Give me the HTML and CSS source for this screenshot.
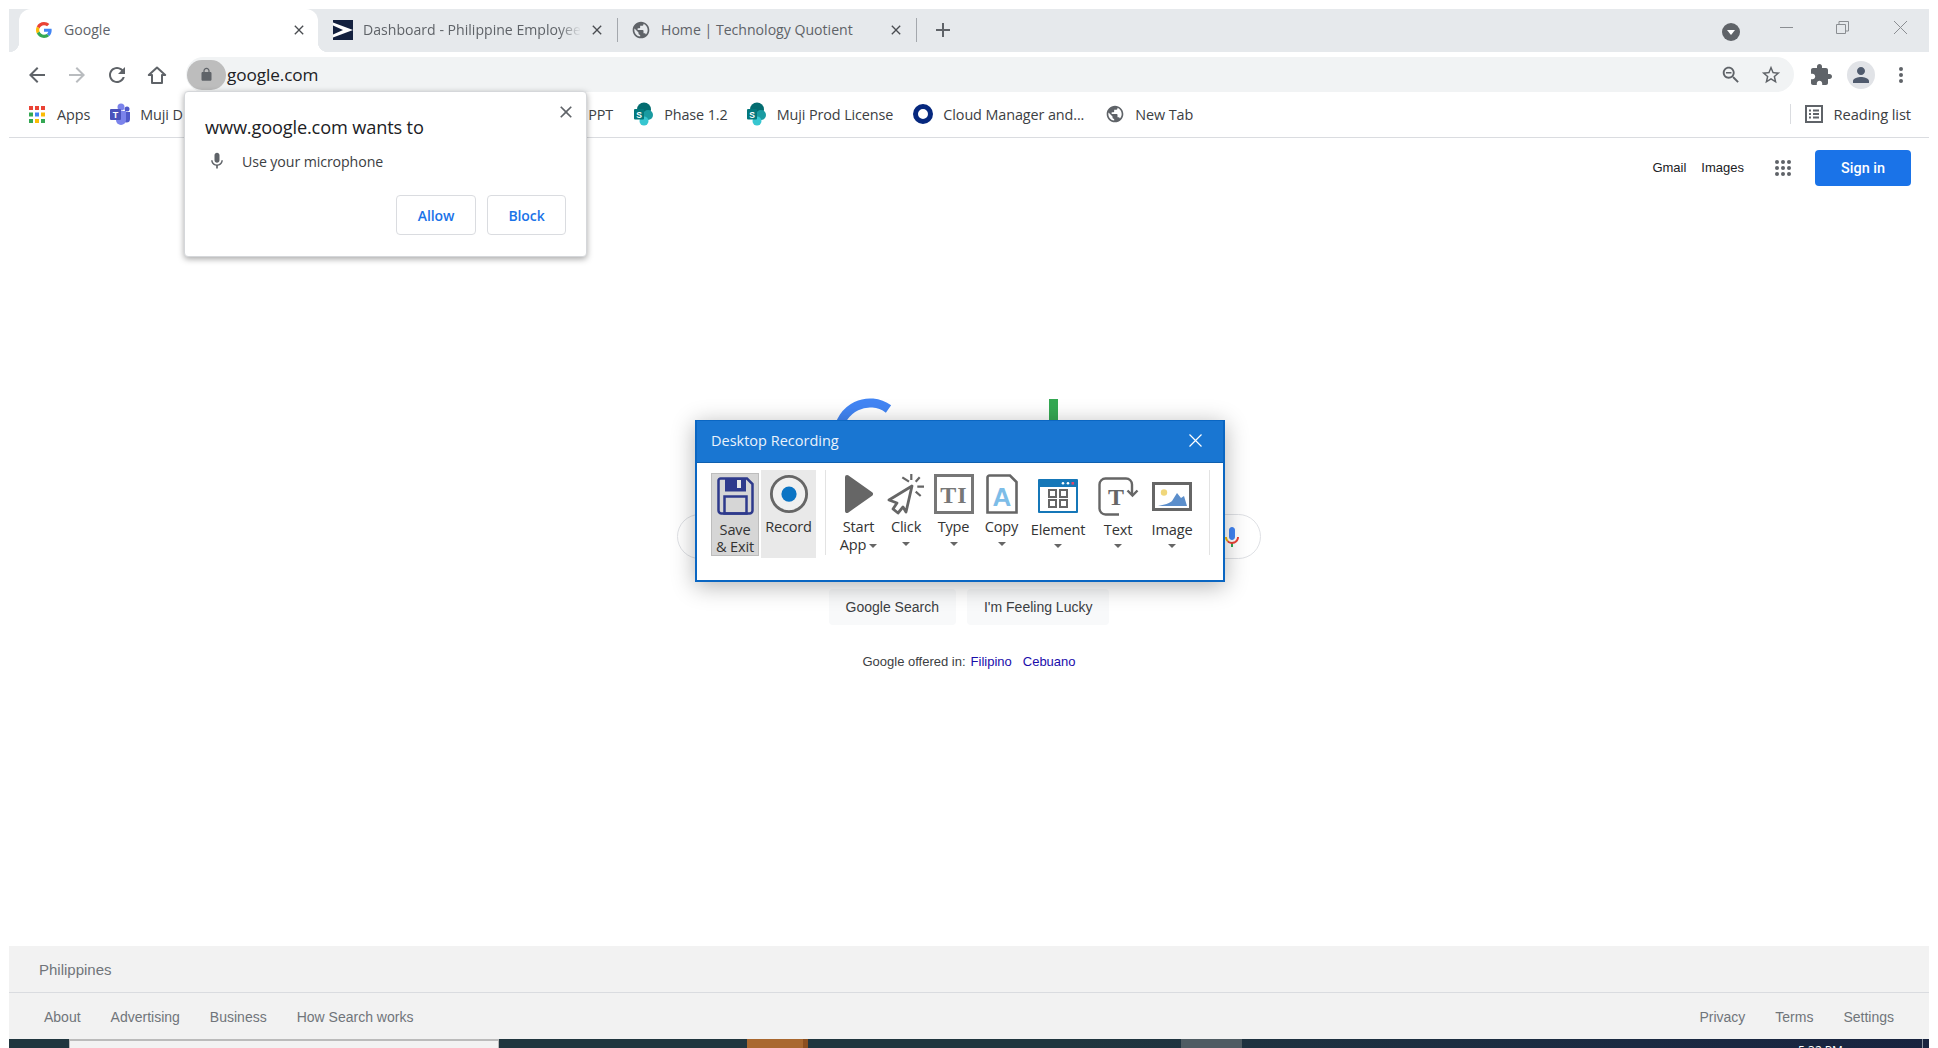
FILE: index.html
```html
<!DOCTYPE html>
<html lang="en">
<head>
<meta charset="utf-8">
<title>Google</title>
<link rel="stylesheet" href="styles.css">
</head>
<body>
<svg class="defs" aria-hidden="true">
  <symbol id="i-close" viewBox="0 0 24 24"><path d="M19 6.41L17.59 5 12 10.59 6.41 5 5 6.41 10.59 12 5 17.59 6.41 19 12 13.41 17.59 19 19 17.59 13.41 12z"/></symbol>
  <symbol id="i-globe" viewBox="0 0 24 24"><path d="M12 2C6.48 2 2 6.48 2 12s4.48 10 10 10 10-4.48 10-10S17.52 2 12 2zm-1 17.93c-3.95-.49-7-3.85-7-7.93 0-.62.08-1.21.21-1.79L9 15v1c0 1.1.9 2 2 2v1.93zm6.9-2.54c-.26-.81-1-1.39-1.9-1.39h-1v-3c0-.55-.45-1-1-1H8v-2h2c.55 0 1-.45 1-1V7h2c1.1 0 2-.9 2-2v-.41c2.93 1.19 5 4.06 5 7.41 0 2.08-.8 3.97-2.1 5.39z"/></symbol>
  <symbol id="i-mic" viewBox="0 0 24 24"><path d="M12 14c1.66 0 2.99-1.34 2.99-3L15 5c0-1.66-1.34-3-3-3S9 3.34 9 5v6c0 1.66 1.34 3 3 3zm5.3-3c0 3-2.54 5.1-5.3 5.1S6.7 14 6.7 11H5c0 3.41 2.72 6.23 6 6.72V21h2v-3.28c3.28-.48 6-3.3 6-6.72h-1.7z"/></symbol>
  <symbol id="i-sp" viewBox="0 0 20 24">
    <circle cx="11" cy="7.5" r="7" fill="#036c70"/><circle cx="15" cy="13" r="5" fill="#1a9ba1"/><circle cx="11" cy="19" r="4.5" fill="#37c6d0"/>
    <rect x="1" y="7" width="10" height="10.500" rx="1" fill="#03787c"/>
  </symbol>
  <symbol id="t-back" viewBox="0 0 24 24"><path d="M20 11H7.830l5.590-5.590L12 4l-8 8 8 8 1.410-1.410L7.830 13H20v-2z"/></symbol>
</svg>

<div class="frame">
  <header class="tabstrip">
    <div class="tab tab-active">
      <svg class="favicon" viewBox="0 0 48 48"><path fill="#EA4335" d="M24 9.5c3.54 0 6.71 1.22 9.21 3.6l6.85-6.85C35.9 2.38 30.47 0 24 0 14.62 0 6.51 5.38 2.56 13.22l7.98 6.19C12.43 13.72 17.74 9.5 24 9.5z"/><path fill="#4285F4" d="M46.98 24.55c0-1.57-.15-3.09-.38-4.55H24v9.02h12.94c-.58 2.96-2.26 5.48-4.78 7.18l7.73 6c4.51-4.18 7.09-10.36 7.09-17.65z"/><path fill="#FBBC05" d="M10.53 28.59c-.48-1.45-.76-2.99-.76-4.59s.27-3.14.76-4.59l-7.98-6.19C.92 16.46 0 20.12 0 24c0 3.88.92 7.54 2.56 10.78l7.97-6.19z"/><path fill="#34A853" d="M24 48c6.48 0 11.93-2.13 15.89-5.81l-7.73-6c-2.15 1.45-4.92 2.3-8.16 2.3-6.26 0-11.57-4.22-13.47-9.91l-7.98 6.19C6.51 42.62 14.62 48 24 48z"/></svg>
      <span class="tab-title">Google</span>
      <svg class="tab-x"><use href="#i-close"/></svg>
    </div>
    <div class="tab tab-second">
      <svg class="favicon favicon-wide" viewBox="0 0 20 20"><rect width="20" height="20" fill="#14213f"/><path d="M0 2.5 L20 10 L0 17.5 L0 14.5 L10 10 L0 5.5z" fill="#fff"/></svg>
      <span class="tab-title tab-fade">Dashboard - Philippine Employee</span>
      <svg class="tab-x"><use href="#i-close"/></svg>
    </div>
    <span class="tab-sep"></span>
    <div class="tab">
      <svg class="favicon favicon-wide favicon-globe icon-grey"><use href="#i-globe"/></svg>
      <span class="tab-title">Home | Technology Quotient</span>
      <svg class="tab-x"><use href="#i-close"/></svg>
    </div>
    <span class="tab-sep"></span>
    <svg class="new-tab" viewBox="0 0 16 16"><path d="M7 1h2v6h6v2H9v6H7V9H1V7h6z"/></svg>
    <span class="strip-fill"></span>
    <span class="tab-search"><svg viewBox="0 0 18 18"><circle cx="9" cy="9" r="9" fill="#5f6368"/><path d="M5 7h8l-4 5z" fill="#fff"/></svg></span>
    <div class="win-controls">
      <svg class="win-min" viewBox="0 0 13 13"><path d="M0 6.5h13" /></svg>
      <svg class="win-max" viewBox="0 0 13 13"><path d="M.5 3.5h9v9h-9zM3 3.5V.5h9.5v9.5h-3"/></svg>
      <svg class="win-close" viewBox="0 0 13 13"><path d="M0 0l13 13M13 0L0 13"/></svg>
    </div>
  </header>

  <nav class="toolbar">
    <svg class="tool"><use href="#t-back"/></svg>
    <svg class="tool" viewBox="0 0 24 24"><path class="faint" d="M4 11h12.17l-5.59-5.59L12 4l8 8-8 8-1.41-1.41L16.17 13H4z"/></svg>
    <svg class="tool" viewBox="0 0 24 24"><path d="M17.65 6.35C16.2 4.9 14.21 4 12 4c-4.42 0-7.99 3.58-7.99 8s3.57 8 7.99 8c3.73 0 6.84-2.55 7.73-6h-2.08c-.82 2.33-3.04 4-5.65 4-3.31 0-6-2.69-6-6s2.69-6 6-6c1.66 0 3.14.69 4.22 1.78L13 11h7V4l-2.35 2.35z"/></svg>
    <svg class="tool tool-last" viewBox="0 0 24 24"><path class="home" d="M12 4.5 L3.8 12 H7 V20 H17 V12 H20.2z"/></svg>
    <div class="omnibox">
      <span class="lock-chip"><svg viewBox="0 0 24 24"><path d="M18 8h-1V6c0-2.76-2.24-5-5-5S7 3.24 7 6v2H6c-1.1 0-2 .9-2 2v10c0 1.1.9 2 2 2h12c1.1 0 2-.9 2-2V10c0-1.1-.9-2-2-2zM9 6c0-1.66 1.34-3 3-3s3 1.34 3 3v2H9V6z"/></svg></span>
      <span class="url">google.com</span>
      <svg class="omni-icon omni-zoom" viewBox="0 0 24 24"><path d="M15.5 14h-.79l-.28-.27C15.41 12.59 16 11.11 16 9.5 16 5.91 13.09 3 9.5 3S3 5.91 3 9.5 5.91 16 9.5 16c1.61 0 3.09-.59 4.23-1.57l.27.28v.79l5 4.99L20.49 19l-4.99-5zm-6 0C7.01 14 5 11.99 5 9.5S7.01 5 9.5 5 14 7.01 14 9.5 11.99 14 9.5 14zM6.5 8.7h6v1.6h-6z"/></svg>
      <svg class="omni-icon" viewBox="0 0 24 24"><path d="M22 9.24l-7.19-.62L12 2 9.19 8.63 2 9.24l5.46 4.73L5.82 21 12 17.27 18.18 21l-1.63-7.03L22 9.24zM12 15.4l-3.76 2.27 1-4.28-3.32-2.88 4.38-.38L12 6.1l1.71 4.04 4.38.38-3.32 2.88 1 4.28L12 15.4z"/></svg>
    </div>
    <svg class="tool puzzle" viewBox="0 0 24 24"><path d="M20.5 11H19V7c0-1.1-.9-2-2-2h-4V3.5C13 2.12 11.88 1 10.5 1S8 2.12 8 3.5V5H4c-1.1 0-1.99.9-1.99 2v3.8H3.5c1.49 0 2.7 1.21 2.7 2.7s-1.21 2.7-2.7 2.7H2V20c0 1.1.9 2 2 2h3.8v-1.5c0-1.49 1.21-2.7 2.7-2.7 1.49 0 2.7 1.21 2.7 2.7V22H17c1.1 0 2-.9 2-2v-4h1.5c1.38 0 2.5-1.12 2.5-2.5S21.88 11 20.5 11z"/></svg>
    <span class="avatar"><svg viewBox="0 0 24 24"><path d="M12 12c2.21 0 4-1.79 4-4s-1.79-4-4-4-4 1.79-4 4 1.79 4 4 4zm0 2c-2.67 0-8 1.34-8 4v2h16v-2c0-2.66-5.33-4-8-4z"/></svg></span>
    <svg class="kebab" viewBox="0 0 6 18"><circle cx="3" cy="3" r="2"/><circle cx="3" cy="9" r="2"/><circle cx="3" cy="15" r="2"/></svg>
  </nav>

  <nav class="bookmarks">
    <svg class="bm-apps" viewBox="0 0 16 17">
      <rect width="4" height="4" fill="#ea4335"/><rect x="6" width="4" height="4" fill="#ea4335"/><rect x="12" width="4" height="4" fill="#ea4335"/>
      <rect y="6.5" width="4" height="4" fill="#34a853"/><rect x="6" y="6.5" width="4" height="4" fill="#4285f4"/><rect x="12" y="6.5" width="4" height="4" fill="#fbbc05"/>
      <rect y="13" width="4" height="4" fill="#34a853"/><rect x="6" y="13" width="4" height="4" fill="#fbbc05"/><rect x="12" y="13" width="4" height="4" fill="#34a853"/>
    </svg>
    <span class="bm-text bm-apps-label">Apps</span>
    <svg class="bm-icon bm-teams" viewBox="0 0 20 22">
      <circle cx="11" cy="4" r="3.5" fill="#7b83eb"/><circle cx="17" cy="6" r="2.5" fill="#5059c9"/>
      <path d="M13 9h7v7a3.500 3.500 0 0 1-7 0z" fill="#5059c9"/><path d="M6 8h10v9a5 5 0 0 1-10 0z" fill="#7b83eb"/>
      <rect y="6" width="11" height="11" rx="1" fill="#4b53bc"/><text class="svg-t" x="5.500" y="15" text-anchor="middle">T</text>
    </svg>
    <span class="bm-text bm-muji">Muji D</span>
    <span class="bm-text bm-ppt">PPT</span>
    <svg class="bm-icon bm-sp" viewBox="0 0 20 24"><use href="#i-sp"/><text class="svg-s" x="6" y="15.500" text-anchor="middle">S</text></svg>
    <span class="bm-text bm-sp-label">Phase 1.2</span>
    <svg class="bm-icon bm-sp2" viewBox="0 0 20 24"><use href="#i-sp"/><text class="svg-s" x="6" y="15.500" text-anchor="middle">S</text></svg>
    <span class="bm-text bm-sp-label">Muji Prod License</span>
    <svg class="bm-icon bm-ring" viewBox="0 0 20 20"><circle cx="10" cy="10" r="7.500" fill="none" stroke="#06287e" stroke-width="5"/></svg>
    <span class="bm-text bm-cloud">Cloud Manager and...</span>
    <svg class="bm-icon bm-globe icon-grey"><use href="#i-globe"/></svg>
    <span class="bm-text bm-newtab">New Tab</span>
    <span class="bm-sep"></span>
    <svg class="bm-reading" viewBox="0 0 18 18"><path d="M0 0h18v18H0zM2 2v14h14V2zM4 4.500h2v2H4zM8 4.500h6v2H8zM4 8h2v2H4zM8 8h6v2H8zM4 11.500h2v2H4zM8 11.500h6v2H8z" fill-rule="evenodd"/></svg>
    <span class="bm-text bm-reading-label">Reading list</span>
  </nav>

  <main class="page">
    <div class="page-head">
      <a class="head-link">Gmail</a>
      <a class="head-link">Images</a>
      <svg class="head-grid" viewBox="0 0 16 16"><g fill="#5f6368"><circle cx="2" cy="2" r="2"/><circle cx="8" cy="2" r="2"/><circle cx="14" cy="2" r="2"/><circle cx="2" cy="8" r="2"/><circle cx="8" cy="8" r="2"/><circle cx="14" cy="8" r="2"/><circle cx="2" cy="14" r="2"/><circle cx="8" cy="14" r="2"/><circle cx="14" cy="14" r="2"/></g></svg>
      <button class="signin">Sign in</button>
    </div>

    <div class="center">
      <svg class="logo" viewBox="0 0 272 92">
        <path d="M5.500 36 A31.500 31.500 0 0 1 55.500 12" fill="none" stroke="#4285f4" stroke-width="9"/>
        <rect x="216" y="2" width="9" height="60" fill="#34a853"/>
      </svg>
      <div class="searchbox">
        <svg class="search-mic" viewBox="0 0 24 24">
          <path d="M12 15c1.660 0 3-1.310 3-2.970v-7.020c0-1.660-1.340-3.010-3-3.010s-3 1.340-3 3.010v7.020c0 1.660 1.340 2.970 3 2.970z" fill="#4285f4"/>
          <path d="M11 18.080h2v3.920h-2z" fill="#34a853"/>
          <path d="M7.050 16.870c-1.270-1.330-2.050-2.830-2.050-4.870h2c0 1.450.56 2.420 1.430 3.430z" fill="#f4b400"/>
          <path d="M12 16.930c-2.210 0-3.500-.93-3.570-1.500L7.050 16.870c1.220 1.290 2.950 2.130 4.950 2.130 3.870 0 6.990-2.920 6.990-7h-1.980c0 2.920-2.240 4.930-5.010 4.930z" fill="#ea4335"/>
        </svg>
      </div>
      <div class="search-btns">
        <button class="gbtn">Google Search</button>
        <button class="gbtn">I'm Feeling Lucky</button>
      </div>
      <p class="offered">Google offered in:<a class="lang lang-first">Filipino</a><a class="lang">Cebuano</a></p>
    </div>

    <footer class="gfoot">
      <div class="gfoot-country">Philippines</div>
      <div class="gfoot-links">
        <a>About</a><a>Advertising</a><a>Business</a><a>How Search works</a>
        <span class="gfoot-fill"></span>
        <a>Privacy</a><a>Terms</a><a>Settings</a>
      </div>
    </footer>
  </main>

  <div class="taskbar">
    <span class="tb-search"></span>
    <span class="tb-active"></span>
    <span class="tb-open"></span>
    <span class="tb-clock">5:32 PM</span>
    <span class="tb-edge"></span>
  </div>

  <section class="perm">
    <svg class="perm-x"><use href="#i-close"/></svg>
    <h2 class="perm-title">www.google.com wants to</h2>
    <div class="perm-row"><svg class="perm-mic"><use href="#i-mic"/></svg><span>Use your microphone</span></div>
    <div class="perm-actions"><button class="perm-btn perm-allow">Allow</button><button class="perm-btn perm-block">Block</button></div>
  </section>

  <section class="rec">
    <div class="rec-head">
      <span>Desktop Recording</span>
      <svg class="rec-x" viewBox="0 0 13 13"><path d="M.5.500l12 12M12.500.500l-12 12"/></svg>
    </div>
    <div class="ribbon">
      <div class="rb rb-save">
        <svg class="rb-ic ic-save" viewBox="0 0 37 39">
          <path d="M3.500 1.500H30L35.500 7V33.500a3 3 0 0 1-3 3H4.500a3 3 0 0 1-3-3V3.500a2 2 0 0 1 2-2z" fill="#d6d6d6" stroke="#2e3a8c" stroke-width="2.500"/>
          <rect x="8" y="1.500" width="21" height="13" fill="#2e3a8c"/><rect x="20" y="3" width="4" height="8" fill="#e8e8e8"/>
          <rect x="7.500" y="19.500" width="22" height="17" fill="none" stroke="#2e3a8c" stroke-width="2.500"/>
        </svg>
        <span class="rb-label rb-tight">Save<br>&amp; Exit</span>
      </div>
      <div class="rb rb-record">
        <svg class="rb-ic" viewBox="0 0 42 42"><circle cx="21" cy="20" r="18.500" fill="#f0f0f0" stroke="#666" stroke-width="3"/><circle cx="21" cy="20" r="8" fill="#0b74c4"/></svg>
        <span class="rb-label">Record</span>
      </div>
      <span class="rb-sep"></span>
      <div class="rb rb-start">
        <svg class="rb-ic" viewBox="0 0 30 42"><path d="M3 3 L27 20 L3 37z" fill="#666" stroke="#666" stroke-width="4" stroke-linejoin="round"/></svg>
        <span class="rb-label">Start<br>App<i class="caret caret-inline"></i></span>
      </div>
      <div class="rb rb-click">
        <svg class="rb-ic" viewBox="0 0 38 42"><path d="M25 12 L2 26 L10 29 L6 35 L11 39 L16 33 L19 38z" fill="none" stroke="#666" stroke-width="2.800" stroke-linejoin="round"/><path d="M15.300 3.300L22 7.700M24.300 0V6M32.700 3.300L28.700 7.700M37 12.700H30.300M33.700 22L28.700 17.700" fill="none" stroke="#666" stroke-width="2.200"/></svg>
        <span class="rb-label">Click</span><i class="caret"></i>
      </div>
      <div class="rb rb-type">
        <svg class="rb-ic" viewBox="0 0 40 42"><rect x="1.500" y="1.500" width="37" height="37" fill="none" stroke="#777" stroke-width="3"/><text class="svg-ti" x="20" y="29" text-anchor="middle">TI</text></svg>
        <span class="rb-label">Type</span><i class="caret"></i>
      </div>
      <div class="rb rb-copy">
        <svg class="rb-ic" viewBox="0 0 32 42"><path d="M3.500 1.500H24L30.500 8V38.500H1.500V3.500a2 2 0 0 1 2-2z" fill="none" stroke="#666" stroke-width="2.600"/><text class="svg-a" x="16" y="32" text-anchor="middle">A</text></svg>
        <span class="rb-label">Copy</span><i class="caret"></i>
      </div>
      <div class="rb rb-element">
        <svg class="rb-ic ic-el" viewBox="0 0 40 34"><rect width="40" height="34" rx="1" fill="#1577b8"/><rect x="2" y="8" width="36" height="24" fill="#fff"/><circle cx="25" cy="4.200" r="1.300" fill="#fff"/><circle cx="30" cy="4.200" r="1.300" fill="#fff"/><rect x="33.500" y="3" width="2.600" height="2.600" fill="#e0476b"/><path d="M11 11h7v7h-7zM22 11h7v7h-7zM11 21h7v7h-7zM22 21h7v7h-7z" fill="none" stroke="#666" stroke-width="2"/></svg>
        <span class="rb-label rb-low">Element</span><i class="caret caret-low"></i>
      </div>
      <div class="rb rb-text">
        <svg class="rb-ic ic-tx" viewBox="0 0 41 39"><path d="M21 37.500H7.500a6 6 0 0 1-6-6V7.500a6 6 0 0 1 6-6H28a6 6 0 0 1 6 6V17" fill="none" stroke="#666" stroke-width="2.400"/><path d="M29.500 13.500l5 5 5-5" fill="none" stroke="#666" stroke-width="2.400"/><text class="svg-tx" x="18" y="28" text-anchor="middle">T</text></svg>
        <span class="rb-label rb-low">Text</span><i class="caret caret-low"></i>
      </div>
      <div class="rb rb-image">
        <svg class="rb-ic ic-img" viewBox="0 0 40 29"><rect x="1.500" y="1.500" width="37" height="26" fill="#fff" stroke="#666" stroke-width="3"/><circle cx="12" cy="10.500" r="3.200" fill="#f0d77b"/><path d="M6 24 C12 23 18 21 20 19 L25 11 L29 16 L32 14 L35 24z" fill="#5b8ecb"/></svg>
        <span class="rb-label rb-low">Image</span><i class="caret caret-low"></i>
      </div>
      <span class="rb-sep rb-sep-end"></span>
    </div>
  </section>
</div>
</body>
</html>
```

FILE: styles.css
```css
* { box-sizing: border-box; }
html, body { margin: 0; height: 100%; overflow: hidden; background: #fff; }
body { font-family: "Open Sans", "Liberation Sans", sans-serif; color: #3c4043; }
.defs { position: absolute; width: 0; height: 0; }
button { font: inherit; }

.frame { position: relative; height: 1048px; padding: 9px 9px 0; display: flex; flex-direction: column; overflow: hidden; }

/* tab strip */
.tabstrip { height: 43px; background: #e6e9ec; display: flex; align-items: center; padding-left: 10px; flex: none; }
.tab { position: relative; width: 298px; height: 43px; display: flex; align-items: center; padding: 0 12px 2px 16px; flex: none; }
.tab-active { width: 299px; background: #fff; border-radius: 12px 12px 0 0; padding-left: 17px; padding-right: 11px; }
.tab-second { width: 299px; }
.tab-active::before, .tab-active::after { content: ""; position: absolute; bottom: 0; width: 10px; height: 10px; }
.tab-active::before { left: -10px; background: radial-gradient(circle at 0 0, #e6e9ec 10px, #fff 10.500px); }
.tab-active::after { right: -10px; background: radial-gradient(circle at 100% 0, #e6e9ec 10px, #fff 10.500px); }
.favicon { width: 16px; height: 16px; flex: none; margin-right: 12px; }
.favicon-wide { width: 20px; height: 20px; margin-left: -1px; margin-right: 10px; }
.favicon-globe { margin-left: -3px; }
.icon-grey { fill: #5f6368; }
.tab-title { flex: 1; min-width: 0; white-space: nowrap; overflow: hidden; font-size: 14.100px; color: #5f6368; }
.tab-fade { -webkit-mask-image: linear-gradient(90deg, #000 90%, transparent); mask-image: linear-gradient(90deg, #000 90%, transparent); margin-right: 8px; }
.tab-x { width: 16px; height: 16px; flex: none; fill: #4a4d51; }
.tab-sep { width: 1px; height: 24px; background: #a4a8ad; flex: none; margin-bottom: 2px; }
.new-tab { width: 16px; height: 16px; fill: #5f6368; margin: 0 0 2px 18px; flex: none; }
.strip-fill { flex: 1; }
.tab-search { width: 18px; height: 18px; margin-top: 2px; display: flex; }
.win-controls { display: flex; align-items: center; margin-left: 40px; padding-right: 22px; gap: 43px; margin-top: -6px; }
.win-close { margin-left: 2px; }
.win-controls svg { width: 13px; height: 13px; fill: none; stroke: #8b8e92; stroke-width: 1; }

/* toolbar */
.toolbar { height: 40px; display: flex; align-items: center; padding: 5px 0 0 16px; background: #fff; flex: none; }
.tool { width: 24px; height: 24px; fill: #5f6368; margin-right: 16px; flex: none; }
.tool-last { margin-right: 17px; }
.faint { fill: #b9bcbf; }
.home { fill: none; stroke: #5f6368; stroke-width: 2; stroke-linejoin: round; }
.omnibox { flex: none; width: 1608px; height: 35px; background: #f1f3f4; border-radius: 18px; display: flex; align-items: center; padding-right: 12px; }
.lock-chip { width: 39px; height: 30px; border-radius: 15px; background: #bdbdbd; display: flex; align-items: center; justify-content: center; margin-left: 1px; }
.lock-chip svg { width: 15px; height: 15px; fill: #5f6368; }
.url { font-size: 17.200px; color: #202124; flex: 1; letter-spacing: -.1px; margin-left: 1px; }
.omni-icon { width: 22px; height: 22px; fill: #5f6368; }
.omni-zoom { margin-right: 18px; }
.puzzle { margin: 0 0 0 15px; }
.avatar { width: 28px; height: 28px; border-radius: 50%; background: #e1e3e7; display: flex; align-items: center; justify-content: center; margin-left: 14px; }
.avatar svg { width: 24px; height: 24px; fill: #4f5a6d; }
.kebab { width: 6px; height: 18px; fill: #5f6368; margin-left: 23px; }

/* bookmarks */
.bookmarks { height: 46px; border-bottom: 1px solid #dadce0; display: flex; align-items: center; padding: 0 18px 1px 20px; flex: none; background: #fff; }
.bm-apps { width: 16px; height: 17px; flex: none; }
.bm-text { font-size: 14.400px; color: #3c4043; white-space: nowrap; letter-spacing: -.1px; }
.bm-apps-label { margin-left: 12px; }
.bm-icon { width: 20px; height: 20px; flex: none; }
.bm-teams { margin-left: 20px; width: 20px; height: 22px; }
.bm-muji { margin-left: 10px; width: 61px; }
.bm-ppt { margin-left: 387px; }
.bm-sp { margin-left: 20px; width: 20px; height: 24px; }
.bm-sp2 { margin-left: 18px; width: 20px; height: 24px; }
.bm-sp-label { margin-left: 11px; }
.bm-ring { margin-left: 20px; }
.bm-cloud { margin-left: 10px; }
.bm-globe { margin-left: 21px; }
.bm-newtab { margin-left: 10px; }
.bm-sep { margin-left: auto; width: 1px; height: 20px; background: #dadce0; }
.bm-reading { width: 18px; height: 18px; fill: #5f6368; margin-left: 14px; }
.bm-reading-label { margin-left: 11px; font-size: 14.700px; }
.svg-t { font: 700 9px "Liberation Sans", sans-serif; fill: #fff; }
.svg-s { font: 700 8.500px "Liberation Sans", sans-serif; fill: #fff; }

/* google page */
.page { flex: 1; min-height: 0; display: flex; flex-direction: column; font-family: "Liberation Sans", Arial, sans-serif; }
.page-head { display: flex; justify-content: flex-end; align-items: center; padding: 12px 18px 0 0; }
.head-link { font-size: 13px; color: #202124; margin-bottom: 2px; }
.head-link + .head-link { margin-left: 15px; }
.head-grid { width: 16px; height: 16px; margin: 0 24px 0 31px; }
.signin { width: 96px; height: 36px; background: #1a73e8; color: #fff; border: 0; border-radius: 4px; font-size: 14.400px; font-family: "Roboto", "Liberation Sans", sans-serif; font-weight: 500; padding-bottom: 1px; }
.center { display: flex; flex-direction: column; align-items: center; margin-top: 211px; }
.logo { width: 272px; height: 92px; }
.searchbox { width: 584px; height: 45px; margin-top: 25px; border: 1px solid #dfe1e5; border-radius: 23px; display: flex; align-items: center; justify-content: flex-end; padding-right: 16px; }
.search-mic { width: 24px; height: 24px; }
.search-btns { display: flex; gap: 11px; margin-top: 30px; }
.gbtn { height: 36px; border: 0; background: #f8f9fa; border-radius: 4px; font-size: 14px; color: #3c4043; padding: 0 17px; font-family: "Liberation Sans", sans-serif; }
.offered { margin: 27px 0 0; font-size: 13px; line-height: 20px; color: #3c4043; }
.lang { color: #1a0dab; margin-left: 11px; }
.lang-first { margin-left: 5px; }
.gfoot { margin-top: auto; background: #f2f2f2; color: #70757a; font-size: 14px; }
.gfoot-country { height: 47px; border-bottom: 1px solid #dadce0; padding-left: 30px; display: flex; align-items: center; font-size: 15px; }
.gfoot-links { height: 46px; display: flex; align-items: center; padding: 1px 35px 0; gap: 30px; }
.gfoot-fill { flex: 1; }

/* taskbar */
.taskbar { position: relative; height: 9px; flex: none; display: flex; overflow: hidden; background: linear-gradient(90deg, #20363f 0%, #20363f 55%, #1b2a42 85%, #18233f 100%); }
.tb-search { width: 430px; margin-left: 60px; background: #f2f2f2; border-top: 2px solid #bbb; border-left: 1px solid #bbb; border-right: 1px solid #bbb; }
.tb-active { width: 61px; margin-left: 248px; background: linear-gradient(90deg, #a9682f 92%, #8c4f20 92%); }
.tb-open { width: 61px; margin-left: 373px; background: #4f5c63; }
.tb-clock { position: absolute; left: 1789px; top: 5px; font: 12px/14px "Open Sans", sans-serif; color: #fff; }
.tb-edge { position: absolute; right: 6px; top: 0; width: 1px; height: 9px; background: #8a94a0; }

/* permission bubble */
.perm { position: absolute; left: 184px; top: 91px; width: 403px; height: 166px; background: #fff; border: 1px solid #d5d7da; border-radius: 4px; box-shadow: 0 2px 6px rgba(0,0,0,.35); padding: 23px 20px 0; }
.perm-x { position: absolute; right: 10px; top: 10px; width: 20px; height: 20px; fill: #5f6368; }
.perm-title { margin: 0; font-size: 18.200px; font-weight: 400; line-height: 24px; color: #202124; letter-spacing: -.15px; }
.perm-row { display: flex; align-items: center; margin-top: 10px; font-size: 14.200px; color: #3c4043; letter-spacing: -.1px; height: 24px; }
.perm-mic { width: 20px; height: 20px; fill: #5f6368; margin: 0 15px 0 2px; flex: none; }
.perm-actions { position: absolute; right: 20px; bottom: 21px; display: flex; gap: 11px; }
.perm-btn { width: 79px; height: 40px; background: #fff; border: 1px solid #dadce0; border-radius: 4px; color: #1a73e8; font-size: 14px; font-family: "Open Sans", sans-serif; font-weight: 600; letter-spacing: -.1px; }
.perm-allow { width: 80px; }

/* recording dialog */
.rec { position: absolute; left: 695px; top: 420px; width: 530px; height: 162px; background: #fff; border: 2px solid #0a66c2; border-top-width: 1px; box-shadow: 0 4px 22px rgba(0,0,0,.3); }
.rec-head { height: 42px; background: #1976d2; color: #e9f2fb; font-size: 14.500px; display: flex; align-items: center; justify-content: space-between; padding: 0 21px 3px 14px; border-bottom: 1px solid #0f5fae; }
.rec-x { width: 13px; height: 13px; fill: none; stroke: #fff; stroke-width: 1.200; }
.ribbon { display: flex; align-items: flex-start; padding: 7px 0 0 14px; }
.rb { display: flex; flex-direction: column; align-items: center; flex: none; font-size: 14.600px; color: #333; }
.rb-ic { width: 40px; height: 42px; margin-top: 4px; flex: none; }
.rb-label { display: block; line-height: 18px; text-align: center; margin-top: 1px; letter-spacing: -.2px; white-space: nowrap; }
.rb-tight { line-height: 17px; margin-top: 5px; }
.rb-low { margin-top: 8px; }
.rb-save { width: 48px; height: 83px; margin-top: 3px; background: #d6d6d6; border: 1px solid #bdbdbd; }
.ic-save { width: 37px; height: 39px; margin-top: 3px; }
.rb-record { width: 55px; height: 88px; margin-left: 2px; background: #e9e9e9; }
.rb-sep { width: 1px; height: 85px; margin: 0 9px; background: #e3e3e3; flex: none; }
.rb-sep-end { margin-left: 11px; }
.rb-start { width: 47px; }
.rb-start .rb-ic { width: 30px; }
.rb-click { width: 48px; }
.rb-click .rb-ic { width: 38px; }
.rb-type { width: 47px; }
.rb-copy { width: 49px; }
.rb-copy .rb-ic { width: 32px; }
.rb-element { width: 64px; }
.ic-el { height: 34px; margin-top: 9px; margin-bottom: -1px; }
.rb-text { width: 56px; }
.ic-tx { width: 41px; height: 39px; margin-top: 7px; margin-bottom: -4px; }
.rb-image { width: 52px; }
.ic-img { height: 29px; margin-top: 12px; margin-bottom: 1px; }
.caret { display: block; width: 0; height: 0; border: 4px solid transparent; border-top: 4px solid #666; border-bottom: 0; margin-top: 7px; }
.caret-low { margin-top: 6px; }
.caret-inline { display: inline-block; margin: 0 0 2px 3px; }
.svg-ti { font: 700 24px "Liberation Serif", serif; fill: #777; letter-spacing: 1px; }
.svg-a { font: 700 26px "Liberation Sans", sans-serif; fill: #7dbde8; }
.svg-tx { font: 700 24px "Liberation Serif", serif; fill: #666; }
```
